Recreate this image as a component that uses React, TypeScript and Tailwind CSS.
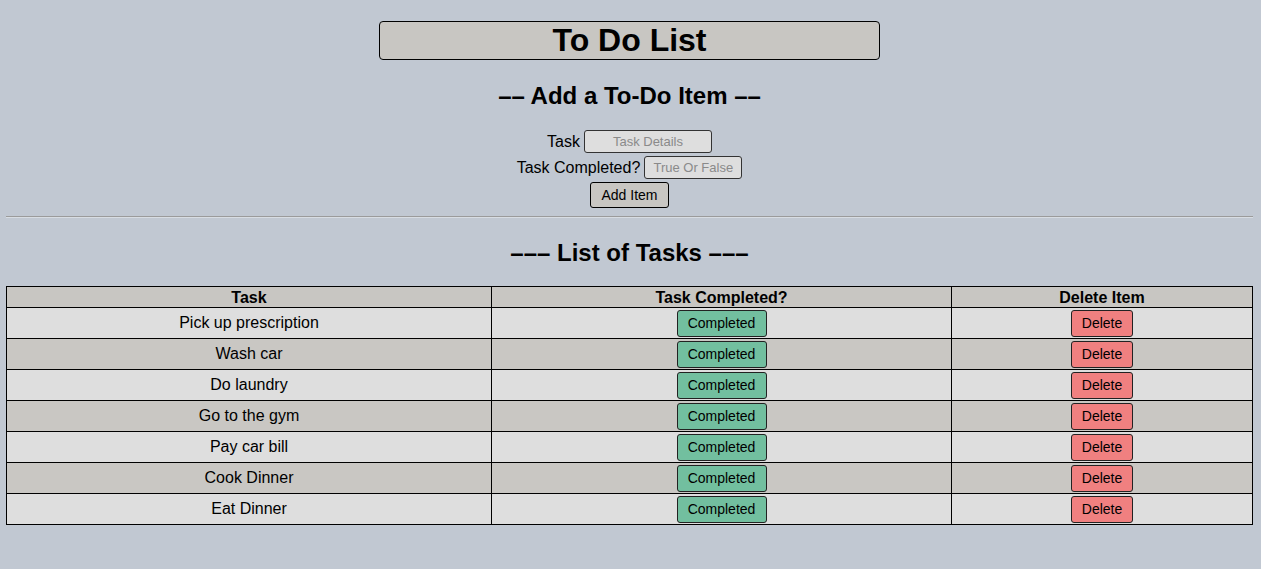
import React from 'react';

const tasks = [
  'Pick up prescription',
  'Wash car',
  'Do laundry',
  'Go to the gym',
  'Pay car bill',
  'Cook Dinner',
  'Eat Dinner',
];

export default function App() {
  return (
    <div className="min-h-[569px] bg-[#c1c8d2] text-black pl-[6px] pr-[8px] pt-[21px] font-['Liberation_Sans',Arial,sans-serif]">
      <div className="flex justify-center">
        <h1 className="w-[501px] h-[39px] border border-black rounded-[4px] bg-[#c8c6c2] text-[32px] leading-[37px] font-bold text-center">
          To Do List
        </h1>
      </div>

      <h2 className="mt-[22px] text-[24px] leading-[28px] font-bold text-center">–– Add a To-Do Item ––</h2>

      <div className="mt-[20px] flex flex-col items-center text-[16px]">
        <div className="flex items-center gap-[4px] h-[23px]">
          <span>Task</span>
          <input
            placeholder="Task Details"
            className="w-[128px] h-[23px] bg-[#dedede] border border-[#333] rounded-[3px] text-[13px] text-center placeholder:text-[#8a8a8a] outline-none"
          />
        </div>
        <div className="mt-[3px] flex items-center gap-[4px] h-[23px]">
          <span>Task Completed?</span>
          <input
            placeholder="True Or False"
            className="w-[98px] h-[23px] bg-[#dedede] border border-[#333] rounded-[3px] text-[13px] text-center placeholder:text-[#8a8a8a] outline-none"
          />
        </div>
        <button className="mt-[3px] w-[79px] h-[26px] bg-[#c8c6c2] border border-black rounded-[3px] text-[14px]">
          Add Item
        </button>
      </div>

      <div className="mt-[8px] border-t border-t-[#9b9b9b] border-b border-b-[#d8dde3]" />

      <h2 className="mt-[21px] text-[24px] leading-[28px] font-bold text-center">––– List of Tasks –––</h2>

      <table className="mt-[19px] w-[1247px] border-collapse border border-black text-[16px]">
        <thead>
          <tr className="bg-[#c8c6c2] h-[21px]">
            <th className="w-[485px] border border-black font-bold leading-[19px] p-0">Task</th>
            <th className="w-[460px] border border-black font-bold leading-[19px] p-0">Task Completed?</th>
            <th className="border border-black font-bold leading-[19px] p-0">Delete Item</th>
          </tr>
        </thead>
        <tbody>
          {tasks.map((t, i) => (
            <tr key={t} className={i % 2 === 0 ? 'bg-[#dedede] h-[31px]' : 'bg-[#c9c7c3] h-[31px]'}>
              <td className="border border-black text-center p-0">{t}</td>
              <td className="border border-black text-center p-0">
                <button className="w-[90px] h-[27px] bg-[#72bf9f] border border-[#222] rounded-[3px] text-[14px] align-middle">
                  Completed
                </button>
              </td>
              <td className="border border-black text-center p-0">
                <button className="w-[62px] h-[27px] bg-[#f08080] border border-[#222] rounded-[3px] text-[14px] align-middle">
                  Delete
                </button>
              </td>
            </tr>
          ))}
        </tbody>
      </table>
    </div>
  );
}
